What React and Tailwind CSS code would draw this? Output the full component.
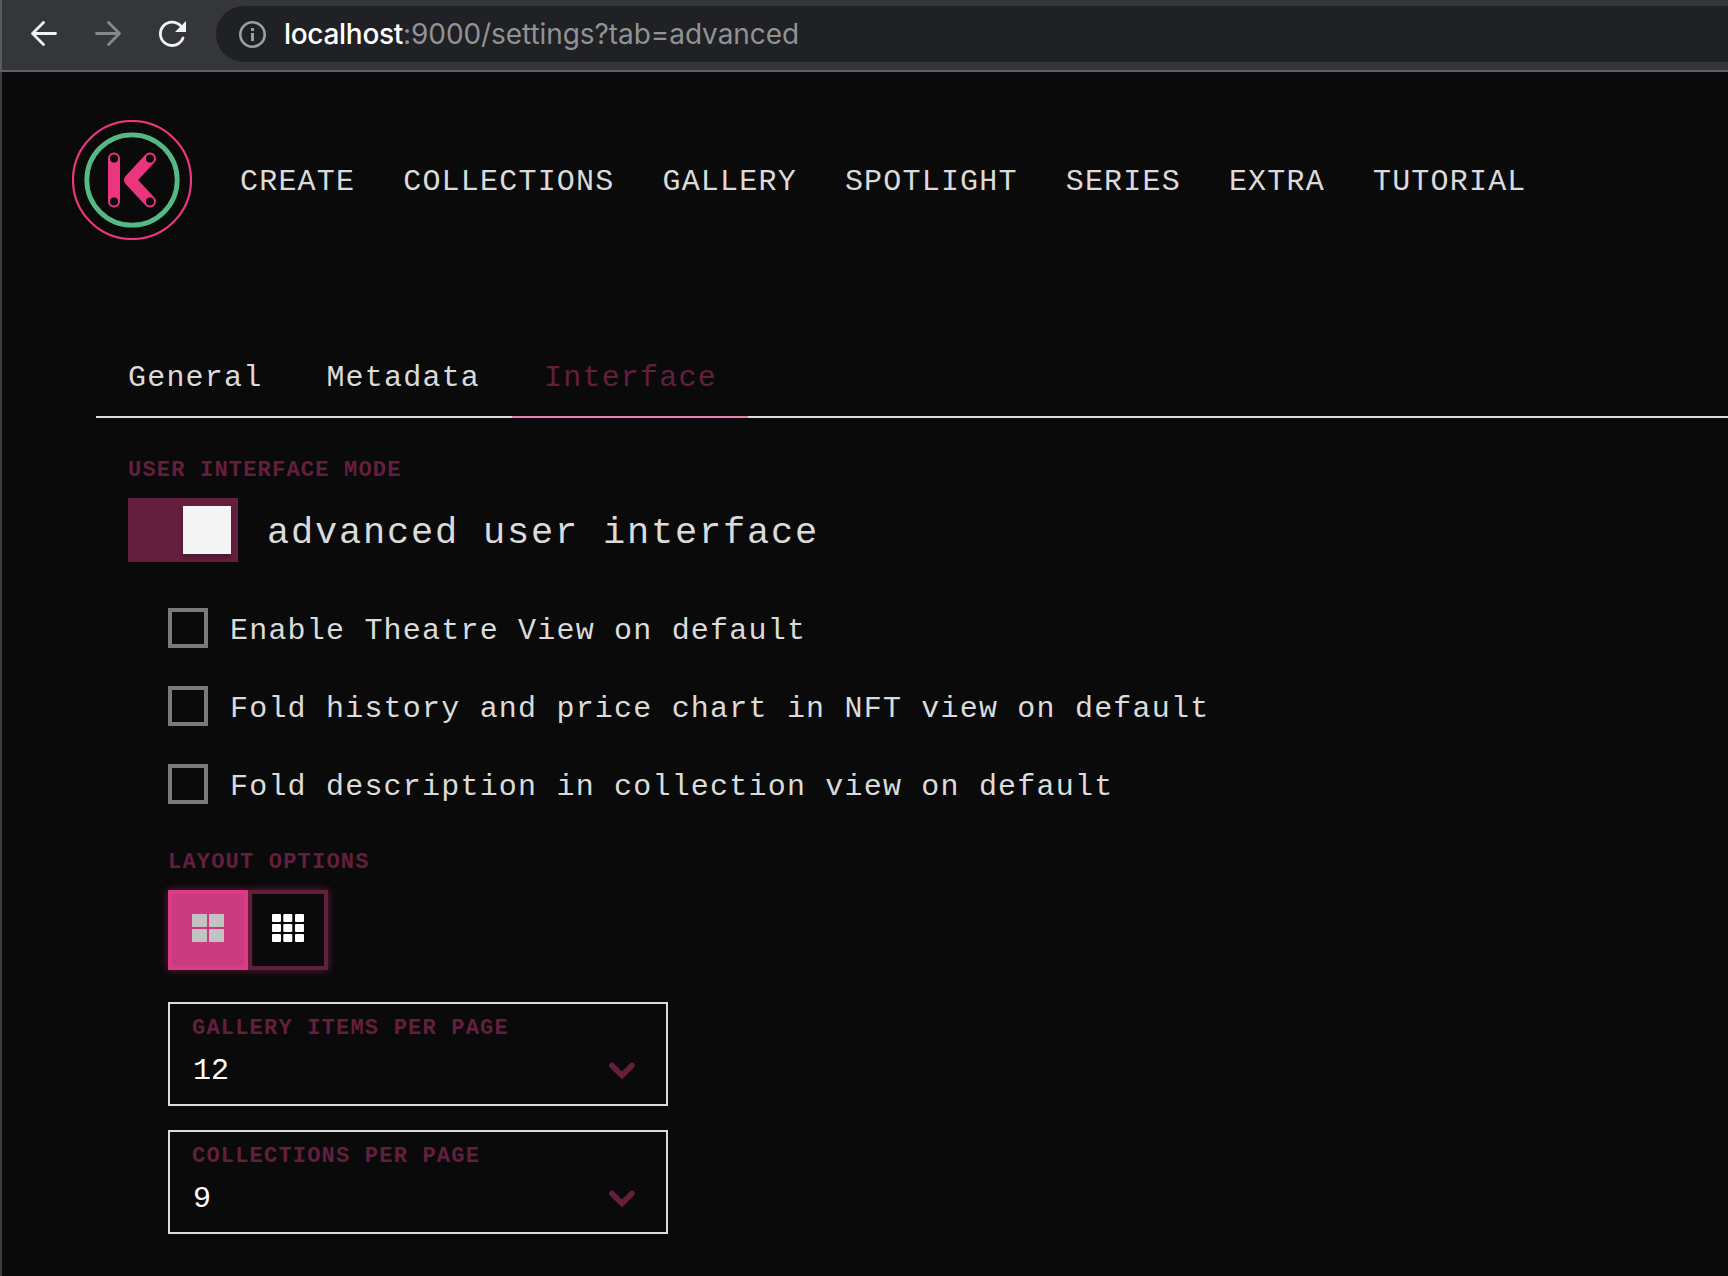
import React from "react";

const NAV = ["CREATE", "COLLECTIONS", "GALLERY", "SPOTLIGHT", "SERIES", "EXTRA", "TUTORIAL"];
const OPTIONS = [
  "Enable Theatre View on default",
  "Fold history and price chart in NFT view on default",
  "Fold description in collection view on default",
];

function BrowserBar() {
  return (
    <header className="-ml-0.5 flex h-[72px] shrink-0 items-start border-b-2 border-[#5f6063] bg-[#35363a]">
      <div className="h-[70px] w-0.5 shrink-0 bg-[#5a5b5e]" />
      <div className="mt-1.5 flex h-14 w-[214px] shrink-0 items-center">
        <svg className="ml-[26px] h-8 w-8" viewBox="0 0 32 32" fill="none" stroke="#f1f3f4" strokeWidth="2.8" strokeLinecap="round" strokeLinejoin="round">
          <path d="M27.5 15.5H5M15.5 4.5L4.5 15.5L15.5 26.5" />
        </svg>
        <svg className="ml-8 h-8 w-8" viewBox="0 0 32 32" fill="none" stroke="#87888a" strokeWidth="2.8" strokeLinecap="round" strokeLinejoin="round">
          <path d="M4.5 15.5H27M16.5 4.5L27.5 15.5L16.5 26.5" />
        </svg>
        <svg className="ml-8 h-8 w-8" viewBox="0 0 32 32" fill="none">
          <path d="M27 20A11.7 11.7 0 1 1 25 8.2" stroke="#f1f3f4" strokeWidth="2.8" strokeLinecap="round" />
          <path d="M30 3V14H19Z" fill="#f1f3f4" />
        </svg>
      </div>
      <div className="mt-1.5 flex h-14 flex-1 items-center rounded-l-full bg-[#202124] pl-[22px]">
        <svg className="h-7 w-7" viewBox="0 0 28 28" fill="none">
          <circle cx="14.5" cy="14.5" r="12.2" stroke="#9aa0a6" strokeWidth="2.6" />
          <path d="M14.5 13V21" stroke="#9aa0a6" strokeWidth="3" />
          <path d="M14.5 8V11" stroke="#9aa0a6" strokeWidth="3" />
        </svg>
        <p className="ml-[18px] whitespace-nowrap font-[Inter,sans-serif] text-[28px] leading-8 tracking-[-0.07px] text-[#919295]">
          <span className="font-medium tracking-[-0.3px] text-white">localhost</span>:9000/settings?tab=advanced
        </p>
      </div>
    </header>
  );
}

function Logo() {
  return (
    <svg className="h-[120px] w-[120px] shrink-0" viewBox="0 0 120 120" fill="none">
      <circle cx="60" cy="60" r="59" stroke="#eb357e" strokeWidth="2.2" />
      <circle cx="60" cy="60" r="45.2" stroke="#56b983" strokeWidth="4.8" />
      <path d="M42 38.5V81.5M78 38.5L58 60L78 81.5" stroke="#eb357e" strokeWidth="12" strokeLinecap="round" strokeLinejoin="round" />
      <g fill="#0a0a0a">
        <circle cx="42" cy="38.5" r="4" />
        <circle cx="42" cy="81.5" r="4" />
        <circle cx="78" cy="38.5" r="4" />
        <circle cx="78" cy="81.5" r="4" />
      </g>
    </svg>
  );
}

function Label({ children }) {
  return (
    <p className="whitespace-pre text-[22px] font-bold leading-6 tracking-[1.2px] text-[#641e3e]">{children}</p>
  );
}

function SelectBox({ label, value }) {
  return (
    <div className="h-[104px] w-[500px] border-2 border-[#dbdbdb] pl-[22px] pr-[31px] pt-[13px]">
      <Label>{label}</Label>
      <div className="mt-3.5 flex h-8 items-center justify-between">
        <span className="pl-px text-[30px] leading-8 text-white">{value}</span>
        <svg className="h-[18px] w-[26px]" viewBox="0 0 26 18" fill="none" stroke="#641e3e" strokeWidth="5.6" strokeLinecap="round">
          <path d="M3 3.5L13 13.5L23 3.5" />
        </svg>
      </div>
    </div>
  );
}

export default function App() {
  return (
    <div className="flex h-[1276px] w-[1728px] flex-col overflow-hidden bg-[#0a0a0a] font-['Liberation_Mono',monospace] text-[#dbdbdb]">
      <div className="flex flex-1 flex-col border-l-2 border-[#3c3c3e]">
        <BrowserBar />
        <nav className="mt-12 flex h-[120px] items-center pl-[70px]">
          <Logo />
          <ul className="ml-12 flex gap-12 pt-[3px]">
            {NAV.map((n) => (
              <li key={n} className="text-[30px] leading-10 tracking-[1.2px]">{n}</li>
            ))}
          </ul>
        </nav>
        <main className="pl-[94px]">
          <div className="mt-[118px] flex h-[60px] items-stretch border-b-2 border-[#dbdbdb]">
            <a className="px-8 text-[30px] leading-[41px] tracking-[1.2px]">General</a>
            <a className="px-8 text-[30px] leading-[41px] tracking-[1.2px]">Metadata</a>
            <a className="-mb-0.5 border-b-2 border-[#e481b3] pl-8 pr-[31px] text-[30px] leading-[41px] tracking-[1.2px] text-[#641e3e]">Interface</a>
          </div>
          <section className="pl-8 pt-[41px]">
            <Label>USER INTERFACE MODE</Label>
            <div className="mt-[15px] flex h-16 items-center">
              <div className="flex h-16 w-[110px] items-center justify-end bg-[#641e3e] pr-[7px]">
                <div className="h-12 w-12 bg-[#f5f5f5] shadow-[0_6px_4px_rgba(0,0,0,0.12),0_2px_2px_rgba(0,0,0,0.15)]" />
              </div>
              <span className="ml-[29px] whitespace-pre pt-[5px] text-[37px] leading-[64px] tracking-[1.8px]">advanced user interface</span>
            </div>
            <div className="ml-10 mt-[46px] flex flex-col gap-[38px]">
              {OPTIONS.map((o) => (
                <label key={o} className="flex h-10 items-center">
                  <span className="h-10 w-10 border-4 border-[#7a7a7a]" />
                  <span className="ml-[22px] whitespace-pre pt-[5px] text-[30px] leading-10 tracking-[1.2px]">{o}</span>
                </label>
              ))}
            </div>
            <div className="ml-10 mt-[47px]">
              <Label>LAYOUT OPTIONS</Label>
              <div className="mt-[15px] flex">
                <button className="relative z-10 flex h-20 w-20 items-center justify-center border-4 border-[#db3c87] bg-[#ca3c7d] pb-1 shadow-[0_0_8px_#641e3e]">
                  <svg className="h-7 w-8" viewBox="0 0 32 28" fill="#c2c2c2">
                    <rect width="15" height="13" rx="1" />
                    <rect x="17" width="15" height="13" rx="1" />
                    <rect y="15" width="15" height="13" rx="1" />
                    <rect x="17" y="15" width="15" height="13" rx="1" />
                  </svg>
                </button>
                <button className="flex h-20 w-20 items-center justify-center border-4 border-[#641e3e] bg-[#0a0a0a] pb-1 shadow-[0_0_8px_#641e3e]">
                  <svg className="h-7 w-8" viewBox="0 0 32 28" fill="#ffffff">
                    {[0, 10, 20].map((y) =>
                      [0, 11.3, 23].map((x) => <rect key={`${x}-${y}`} x={x} y={y} width="9" height="8" rx="1" />)
                    )}
                  </svg>
                </button>
              </div>
              <div className="mt-8 flex flex-col gap-6">
                <SelectBox label="GALLERY ITEMS PER PAGE" value="12" />
                <SelectBox label="COLLECTIONS PER PAGE" value="9" />
              </div>
            </div>
          </section>
        </main>
      </div>
    </div>
  );
}
